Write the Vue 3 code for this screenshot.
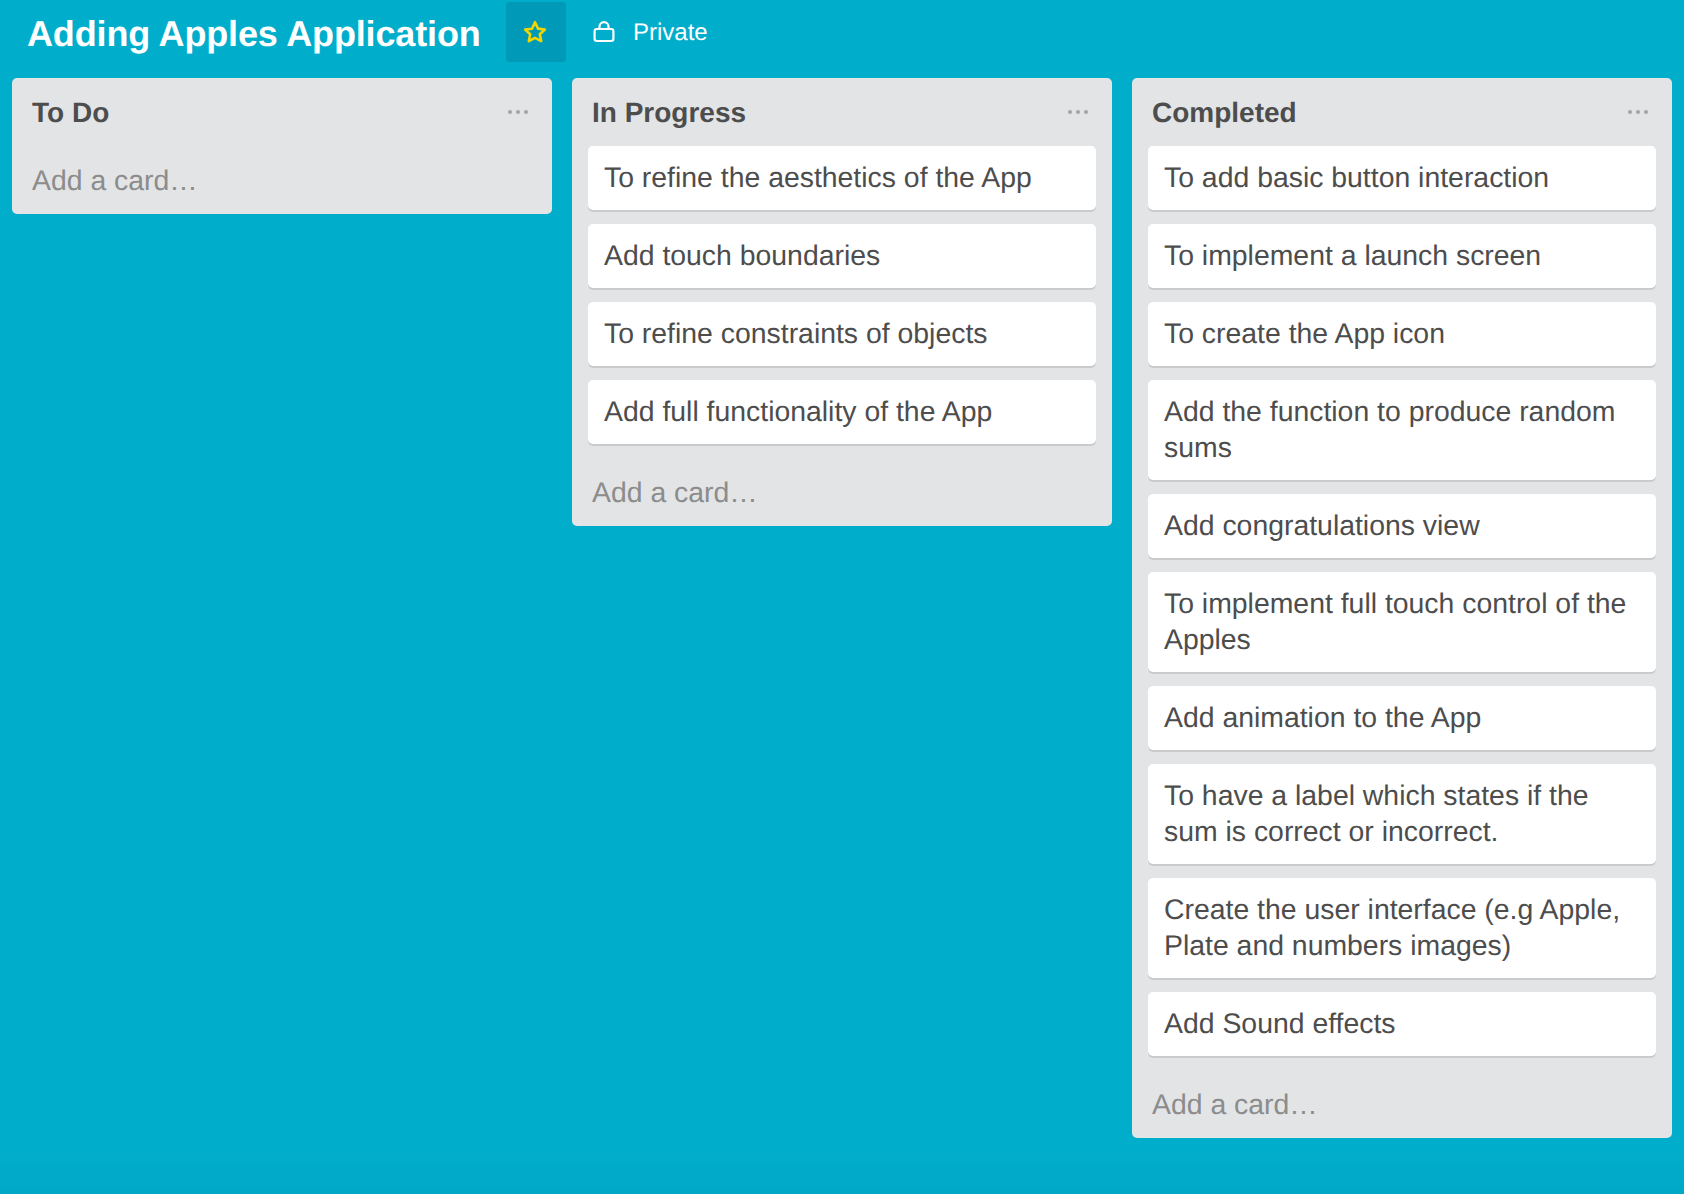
<template>
  <div class="board">
    <header class="board-header">
      <h1 class="board-title">Adding Apples Application</h1>
      <button class="star-btn" type="button" aria-label="Star">
        <svg width="26" height="26" viewBox="0 0 26 26" fill="none">
          <path d="M13 3.2l3 6.4 6.9.9-5.1 4.7 1.4 6.9L13 18.8l-6.2 3.4 1.4-6.9-5.1-4.7 6.9-.9z" stroke="#f2d600" stroke-width="2.6" stroke-linejoin="round" />
        </svg>
      </button>
      <div class="privacy">
        <svg width="22" height="22" viewBox="0 0 22 22" fill="none">
          <path d="M6.5 8V5.6a4.5 4.5 0 0 1 9 0V8" stroke="#fff" stroke-width="2.2" />
          <rect x="1.6" y="8" width="18.8" height="12" rx="2.2" stroke="#fff" stroke-width="2.2" />
        </svg>
        <span>Private</span>
      </div>
    </header>

    <div class="lists">
      <section v-for="list in lists" :key="list.title" class="list">
        <div class="list-header">
          <h2>{{ list.title }}</h2>
          <span class="list-menu"><i></i><i></i><i></i></span>
        </div>
        <div v-if="list.cards.length" class="cards">
          <div v-for="card in list.cards" :key="card" class="card">{{ card }}</div>
        </div>
        <div class="add-card" :class="{ 'add-card-empty': !list.cards.length }">Add a card…</div>
      </section>
    </div>
  </div>
</template>

<script setup>
const lists = [
  { title: 'To Do', cards: [] },
  {
    title: 'In Progress',
    cards: [
      'To refine the aesthetics of the App',
      'Add touch boundaries',
      'To refine constraints of objects',
      'Add full functionality of the App'
    ]
  },
  {
    title: 'Completed',
    cards: [
      'To add basic button interaction',
      'To implement a launch screen',
      'To create the App icon',
      'Add the function to produce random sums',
      'Add congratulations view',
      'To implement full touch control of the Apples',
      'Add animation to the App',
      'To have a label which states if the sum is correct or incorrect.',
      'Create the user interface (e.g Apple, Plate and numbers images)',
      'Add Sound effects'
    ]
  }
]
</script>

<style>
html, body {
  margin: 0;
  background: #00aecc;
}
</style>

<style scoped>
.board {
  height: 1194px;
  overflow: hidden;
  box-sizing: border-box;
  background: linear-gradient(180deg, #00aecc 0%, #00aecc 96%, #00a8c6 100%);
  font-family: "Liberation Sans", Arial, sans-serif;
  color: #4d4d4d;
  text-rendering: geometricPrecision;
}

.board-header {
  display: flex;
  align-items: center;
  height: 78px;
  padding: 2px 0 16px 27px;
  box-sizing: border-box;
}

.board-title {
  width: 452px;
  margin: 3px 0 0;
  font-size: 36px;
  font-weight: 700;
  line-height: 57px;
  letter-spacing: -0.15px;
  color: #fff;
  white-space: nowrap;
}

.star-btn {
  display: flex;
  align-items: center;
  justify-content: center;
  width: 60px;
  height: 60px;
  margin-left: 27px;
  padding: 0 2px 0 0;
  border: 0;
  border-radius: 4px;
  background: #009ab8;
}

.privacy {
  display: flex;
  align-items: center;
  gap: 18px;
  margin-left: 27px;
  color: #fff;
  font-size: 24px;
}

.privacy span {
  margin-top: 2px;
}

.lists {
  display: flex;
  align-items: flex-start;
  gap: 20px;
  padding-left: 12px;
}

.list {
  width: 540px;
  flex: none;
  box-sizing: border-box;
  padding: 0 16px;
  border-radius: 5px;
  background: #e2e4e6;
}

.list-header {
  display: flex;
  justify-content: space-between;
  height: 68px;
  padding: 0 8px 0 4px;
}

.list-header h2 {
  margin: 1px 0 0;
  font-size: 28px;
  font-weight: 700;
  line-height: 68px;
}

.list-menu {
  display: flex;
  gap: 4px;
  margin-top: 32px;
}

.list-menu i {
  width: 4px;
  height: 4px;
  border-radius: 50%;
  background: #a5a5a5;
}

.cards {
  display: flex;
  flex-direction: column;
  gap: 14px;
}

.card {
  padding: 13.5px 16px 14.5px;
  border-radius: 5px;
  background: #fff;
  box-shadow: 0 2px 0 #c8cacc;
  font-size: 28.4px;
  line-height: 36px;
}

.add-card {
  padding: 16px 4px 0;
  color: #8c8c8c;
  font-size: 28.4px;
  line-height: 66px;
}

.add-card-empty {
  height: 68px;
  box-sizing: border-box;
  padding-top: 0;
  line-height: 70px;
}
</style>
